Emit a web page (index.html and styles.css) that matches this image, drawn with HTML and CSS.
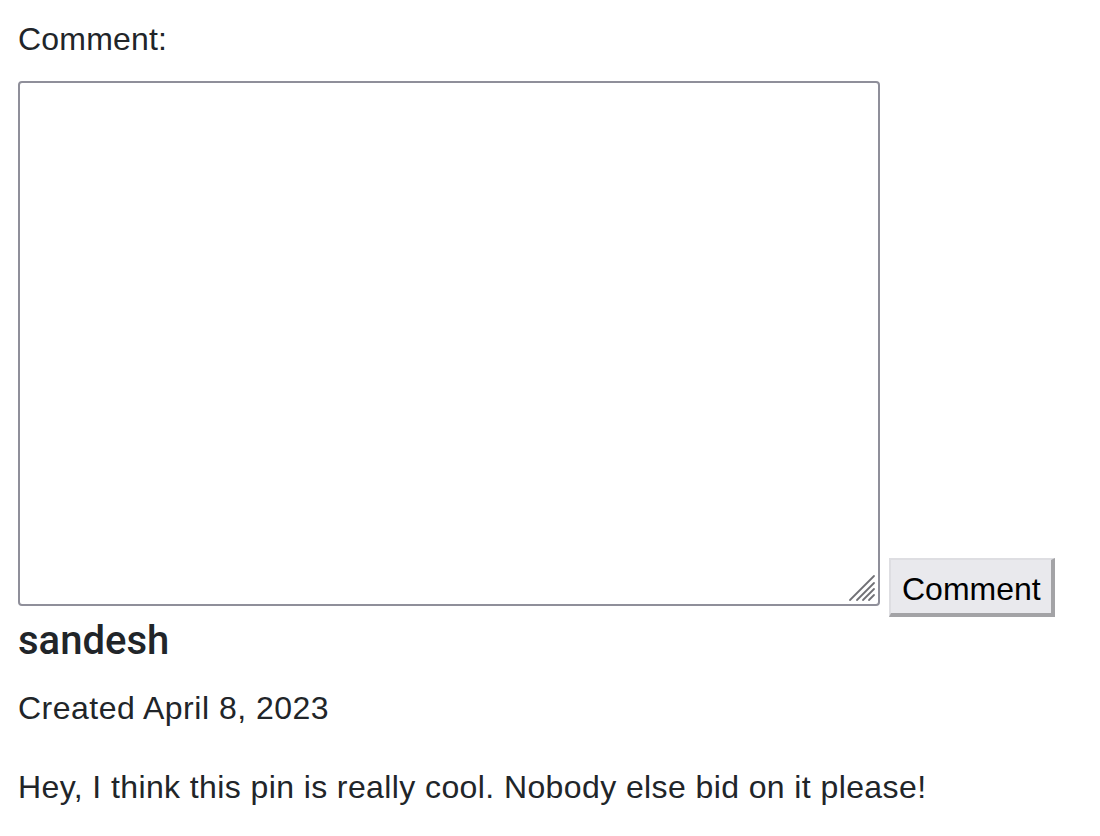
FILE: index.html
```html
<!DOCTYPE html>
<html lang="en">
<head>
<meta charset="utf-8">
<title>Comment</title>
<link rel="stylesheet" href="styles.css">
</head>
<body>
<main class="page">
  <form class="comment-form">
    <label class="comment-label" for="comment">Comment:</label>
    <div class="comment-row">
      <div class="textarea-wrap">
        <textarea id="comment" class="comment-input"></textarea>
        <svg class="grip" width="28" height="28" viewBox="0 0 28 28" aria-hidden="true">
          <g stroke="#707075" stroke-width="1.8" stroke-linecap="round">
            <line x1="2" y1="26" x2="26" y2="2"/>
            <line x1="9" y1="26" x2="26" y2="9"/>
            <line x1="15" y1="26" x2="26" y2="15"/>
            <line x1="21" y1="26" x2="26" y2="21"/>
          </g>
        </svg>
      </div>
      <button type="button" class="comment-button">Comment</button>
    </div>
  </form>
  <h5 class="author">sandesh</h5>
  <p class="meta">Created April 8, 2023</p>
  <p class="body-text">Hey, I think this pin is really cool. Nobody else bid on it please!</p>
</main>
</body>
</html>
```

FILE: styles.css
```css
html, body {
  margin: 0;
  padding: 0;
  background: #ffffff;
}

.page {
  padding: 15px 0 0 18px;
  font-family: "Liberation Sans", Arial, sans-serif;
  font-size: 32px;
  line-height: 48px;
  color: #212529;
}

.comment-form {
  display: flex;
  flex-direction: column;
  align-items: flex-start;
}

.comment-label {
  display: block;
  margin-bottom: 18px;
  letter-spacing: 0.2px;
}

.comment-row {
  display: flex;
  align-items: flex-end;
  gap: 9px;
}

.textarea-wrap {
  position: relative;
  width: 862px;
  height: 525px;
}

.comment-input {
  display: block;
  box-sizing: border-box;
  width: 862px;
  height: 525px;
  margin: 0;
  padding: 4px;
  border: 2px solid #8f8f9a;
  border-radius: 4px;
  background: #ffffff;
  resize: none;
  font-family: "Liberation Sans", Arial, sans-serif;
  font-size: 32px;
  outline: none;
}

.grip {
  position: absolute;
  right: 4px;
  bottom: 4px;
}

.comment-button {
  box-sizing: border-box;
  height: 59px;
  margin: 0 0 -11px 0;
  padding: 5px 10px 0 11px;
  border-style: solid;
  border-width: 2px 4px 4px 2px;
  border-color: #dedee2 #a3a3a6 #a3a3a6 #dedee2;
  border-radius: 0;
  background: #e9e9ed;
  color: #000000;
  font-family: "Liberation Sans", Arial, sans-serif;
  font-size: 32px;
  line-height: 48px;
  text-align: left;
  cursor: pointer;
}

.author {
  margin: 13px 0 20px 0;
  font-family: Roboto, "Liberation Sans", Arial, sans-serif;
  font-size: 40px;
  line-height: 44px;
  font-weight: 500;
  color: #212529;
}

.meta {
  margin: 0 0 31px 0;
  padding-top: 1px;
  letter-spacing: 0.5px;
}

.body-text {
  margin: 0;
  letter-spacing: 0.4px;
}
```
